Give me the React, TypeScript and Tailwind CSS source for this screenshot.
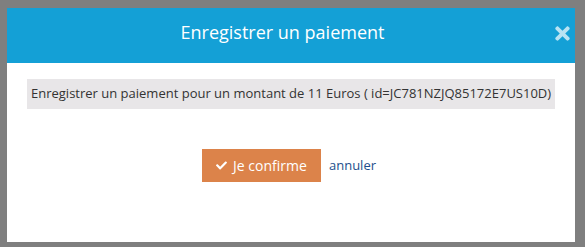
import { FaCheck, FaTimes } from 'react-icons/fa'

export default function App() {
  return (
    <div className="w-[585px] h-[247px] bg-[#7f7f7f] pt-2 pl-[7px] font-['Open_Sans',sans-serif]">
      <div className="w-[568px] h-[234px] bg-white flex flex-col">
        <div className="relative h-[55px] bg-[#14a0d6] flex items-center justify-center pb-[8px] pr-[17px]">
          <h1 className="text-white text-[18px] leading-none">Enregistrer un paiement</h1>
          <button className="absolute right-[2px] top-[15px] text-white/70">
            <FaTimes size={21} />
          </button>
        </div>
        <div className="px-5 pt-4">
          <div className="h-[30px] bg-[#e8e6e8] flex items-center px-[4px] text-[13px] text-[#333] whitespace-nowrap overflow-hidden">
            Enregistrer un paiement pour un montant de 11 Euros ( id=JC781NZJQ85172E7US10D)
          </div>
          <div className="mt-10 flex items-center justify-center gap-2 pr-[4px]">
            <button className="h-[33px] w-[119px] bg-[#dc834a] text-white text-[14px] flex items-center justify-center gap-[6px]">
              <FaCheck size={11} />
              Je confirme
            </button>
            <a className="text-[13px] text-[#1d4f8c]">annuler</a>
          </div>
        </div>
      </div>
    </div>
  )
}
